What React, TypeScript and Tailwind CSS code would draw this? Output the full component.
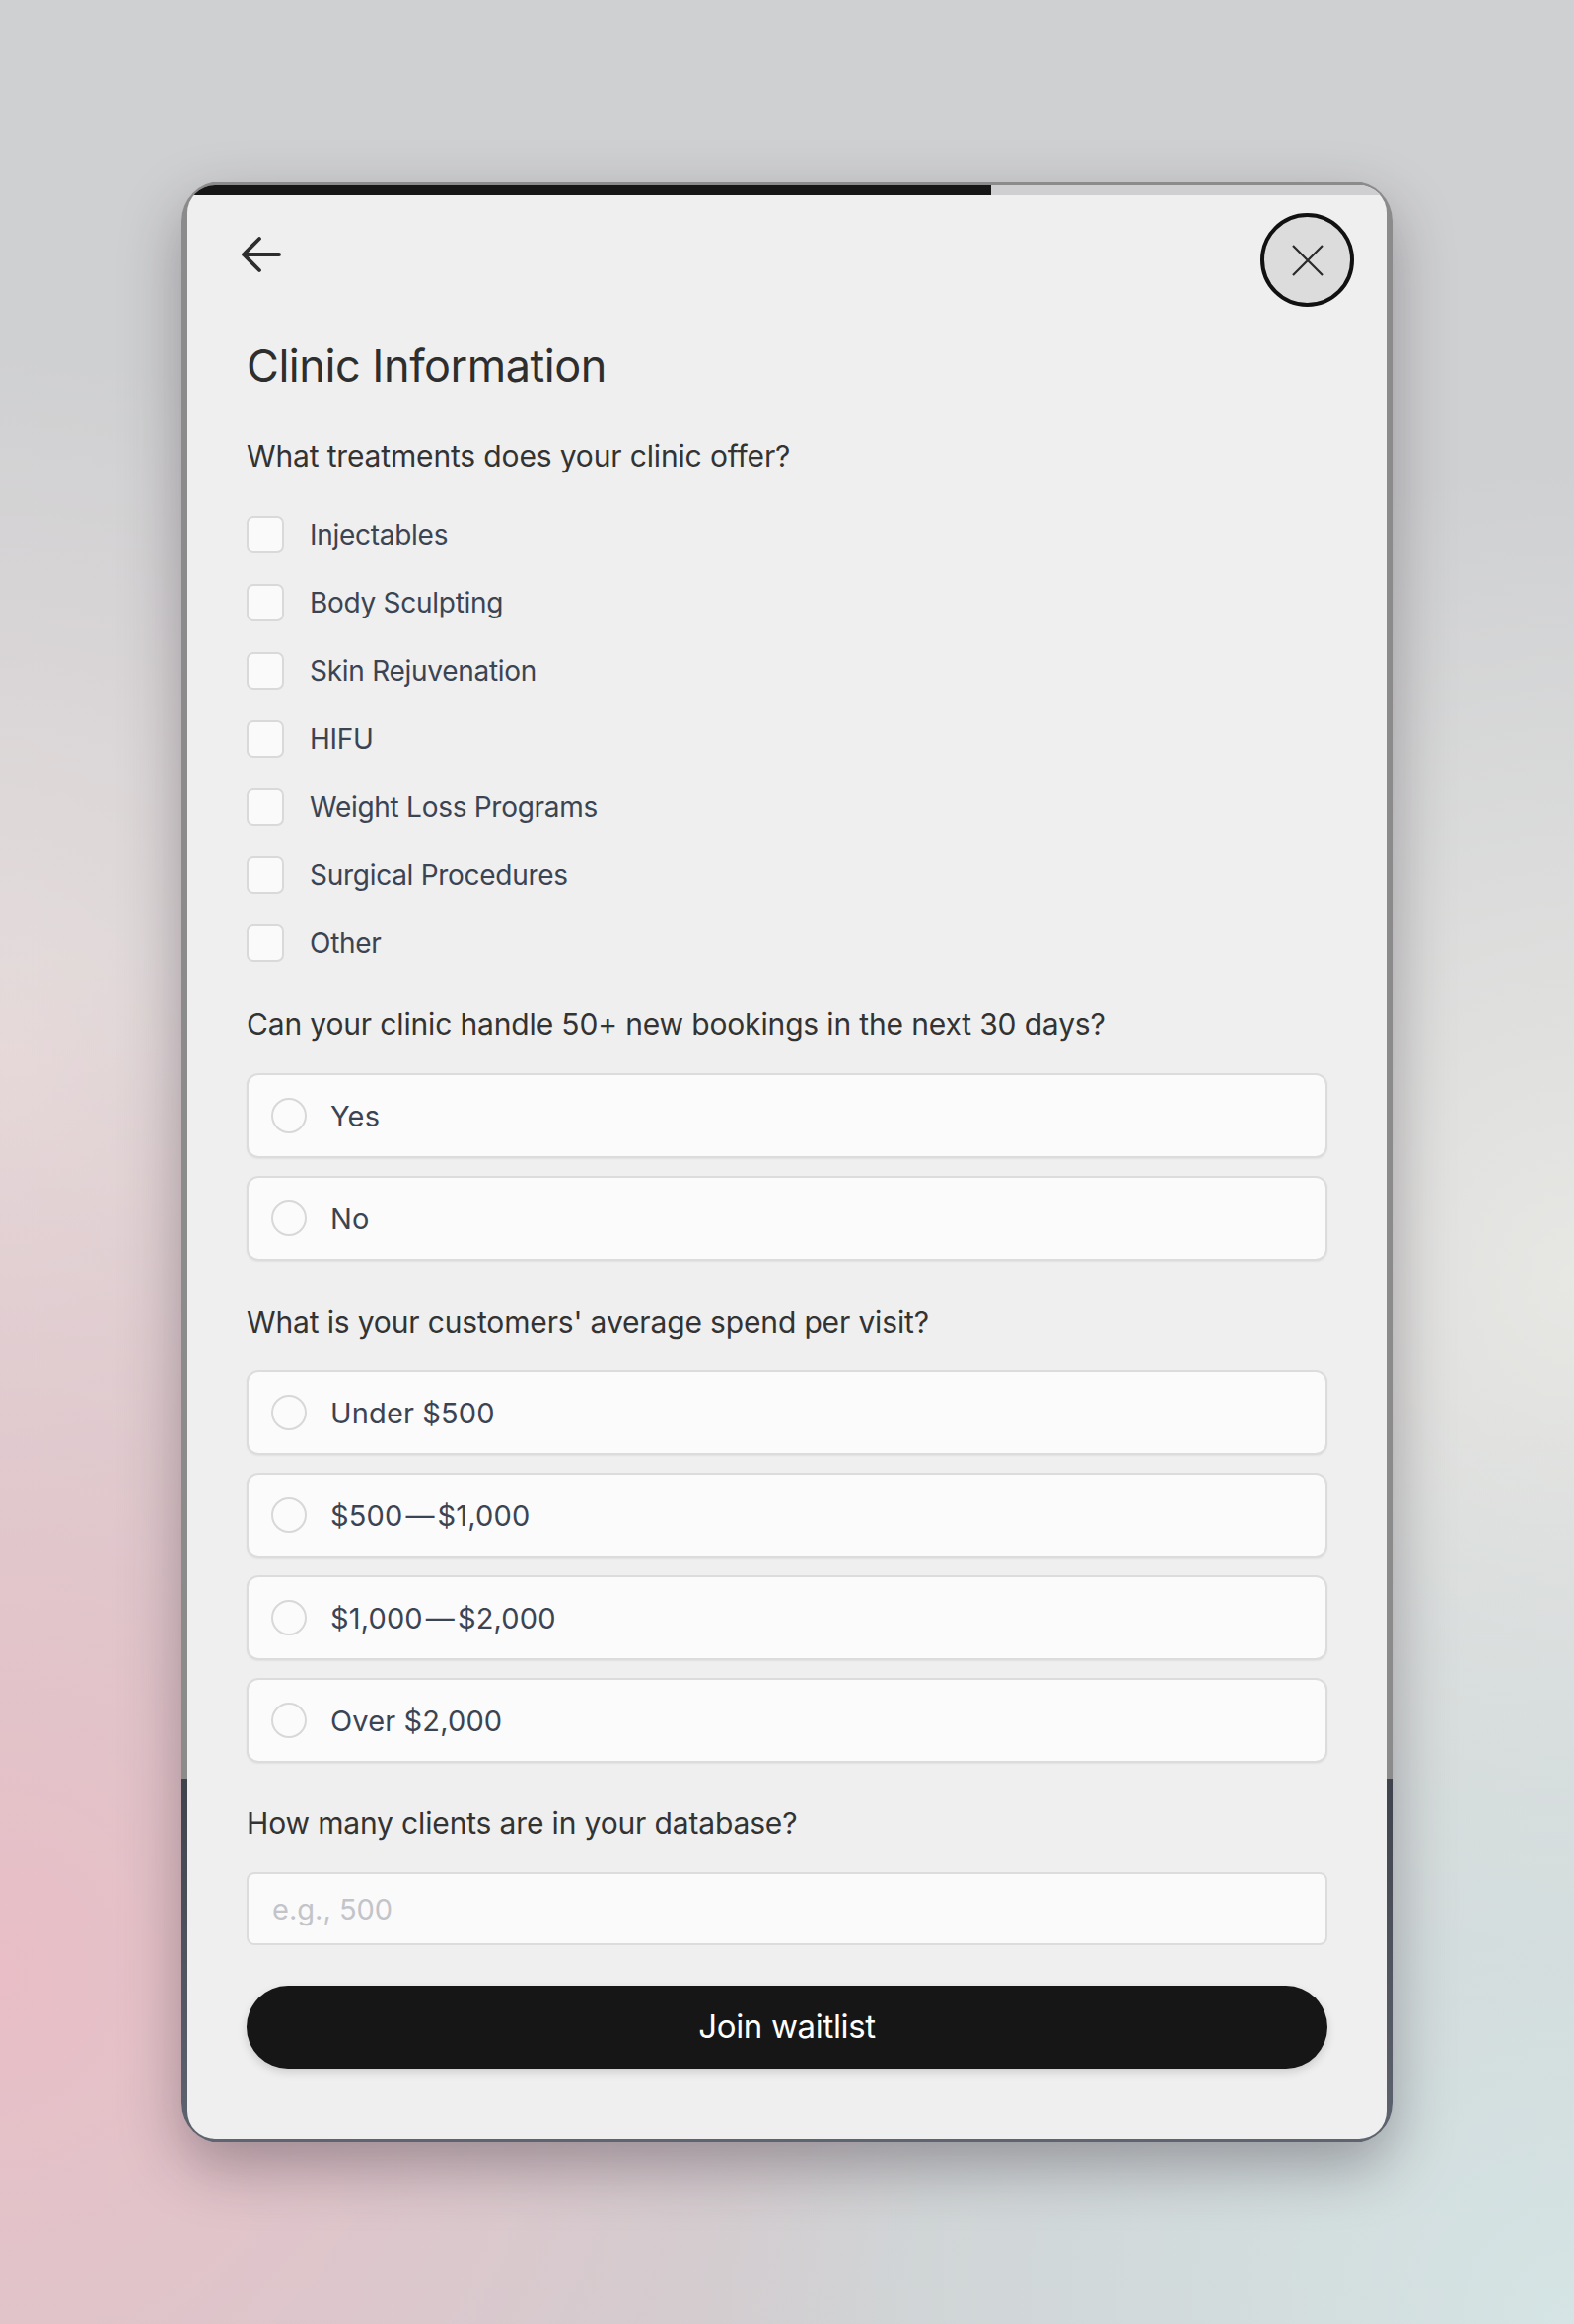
import React from "react";

const treatments = [
  "Injectables",
  "Body Sculpting",
  "Skin Rejuvenation",
  "HIFU",
  "Weight Loss Programs",
  "Surgical Procedures",
  "Other",
];

const spendOptions = ["Under $500", "$500—$1,000", "$1,000—$2,000", "Over $2,000"];

function Question({ children }: { children: React.ReactNode }) {
  return <p className="text-[30px] leading-[40px] text-[#333333] tracking-[-0.005em]">{children}</p>;
}

function RadioCard({ label }: { label: string }) {
  const parts = label.split("—");
  return (
    <label className="flex h-[86px] items-center rounded-[12px] border-2 border-[#dcdcdc] bg-[#fbfbfb] pl-[23px] shadow-[0_1px_2px_rgba(0,0,0,0.06)]">
      <span className="h-[36px] w-[36px] rounded-full border-2 border-[#d8d8d8] bg-[#fbfbfb]" />
      <span className="ml-[24px] text-[29px] leading-none text-[#3b4453] tracking-[0.005em]">
        {parts.length > 1 ? (
          <>
            {parts[0]}
            <span className="mx-[3px]">—</span>
            {parts[1]}
          </>
        ) : (
          label
        )}
      </span>
    </label>
  );
}

export default function App() {
  return (
    <div className="flex h-[2356px] w-full items-center justify-center bg-[#cfd0d2] bg-[radial-gradient(ellipse_60%_45%_at_0%_85%,#e9bec6,transparent),radial-gradient(ellipse_55%_40%_at_100%_100%,#d5e4e4,transparent),radial-gradient(ellipse_45%_35%_at_100%_55%,#e7e7e4,transparent),radial-gradient(ellipse_40%_30%_at_0%_45%,#e6dcdc,transparent)] font-[Inter,'Noto_Sans',sans-serif]">
      <div className="h-[1988px] w-[1228px] rounded-[40px] bg-[linear-gradient(to_bottom,#8b8b8b_81.5%,#3f434c_81.5%,#5f6570)] pl-[6px] pt-[4px] shadow-[0_24px_60px_rgba(40,30,40,0.35)]">
        <div className="relative flex h-[1980px] w-[1216px] flex-col overflow-hidden rounded-[28px] bg-[#efefef]">
          {/* progress */}
          <div className="flex h-[10px] w-full">
            <div className="h-full w-[67%] bg-[#161616]" />
            <div className="h-full flex-1 bg-[#cfcfd2]" />
          </div>

          <button className="absolute right-[33px] top-[28px] flex h-[95px] w-[95px] items-center justify-center rounded-full border-[4px] border-[#111111] bg-[#dcdcdc]">
            <svg width="32" height="32" viewBox="0 0 32 32" fill="none" stroke="#2b2b2b" strokeWidth="2.2">
              <path d="M1 1L31 31M31 1L1 31" />
            </svg>
          </button>

          <div className="flex flex-col px-[60px]">
            <div className="mt-[42px] h-[38px] w-[42px] -ml-[6px]">
              <svg width="42" height="38" viewBox="0 0 42 38" fill="none" stroke="#2d2d2d" strokeWidth="3.8" strokeLinecap="round" strokeLinejoin="round">
                <path d="M3 18H39M19 2L3 18L19 34" />
              </svg>
            </div>

            <h1 className="mt-[70px] text-[45px] leading-[46px] text-[#2e2e2e] tracking-[-0.01em]">Clinic Information</h1>

            <div className="mt-[48px]">
              <Question>What treatments does your clinic offer?</Question>
              <div className="mt-[41px] flex flex-col gap-[31px]">
                {treatments.map((t) => (
                  <label key={t} className="flex h-[38px] items-center">
                    <span className="h-[38px] w-[38px] rounded-[7px] border-2 border-[#d9d9d9] bg-[#fafafa]" />
                    <span className="ml-[26px] text-[28px] leading-none text-[#3b4453] tracking-[-0.01em]">{t}</span>
                  </label>
                ))}
              </div>
            </div>

            <div className="mt-[43px]">
              <Question>Can your clinic handle 50+ new bookings in the next 30 days?</Question>
              <div className="mt-[30px] flex flex-col gap-[18px]">
                <RadioCard label="Yes" />
                <RadioCard label="No" />
              </div>
            </div>

            <div className="mt-[42px]">
              <Question>What is your customers' average spend per visit?</Question>
              <div className="mt-[29px] flex flex-col gap-[18px]">
                {spendOptions.map((s) => (
                  <RadioCard key={s} label={s} />
                ))}
              </div>
            </div>

            <div className="mt-[41px]">
              <Question>How many clients are in your database?</Question>
              <input
                placeholder="e.g., 500"
                className="mt-[30px] h-[74px] w-full rounded-[8px] border-2 border-[#dcdcdc] bg-[#fafafa] px-[24px] text-[29px] text-[#3b4453] outline-none placeholder:text-[#c2c4c9]"
              />
            </div>

            <button className="mt-[41px] h-[84px] w-full rounded-full bg-[#161616] text-[33px] text-white shadow-[0_4px_10px_rgba(0,0,0,0.15)] tracking-[-0.01em]">
              Join waitlist
            </button>
          </div>
        </div>
      </div>
    </div>
  );
}
